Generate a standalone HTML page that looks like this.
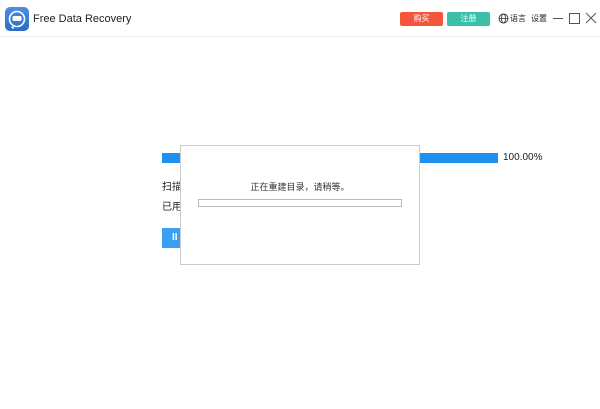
<!DOCTYPE html>
<html><head><meta charset="utf-8"><style>
body{margin:0;width:600px;height:409px;background:#fff;position:relative;overflow:hidden;font-family:"Liberation Sans","Noto Sans CJK SC",sans-serif;color:#333}
.a{position:absolute}
</style></head><body>
<div class="a" style="left:0;top:0;width:600px;height:36px;border-bottom:1px solid #eee"></div>
<div class="a" style="left:5px;top:7px;width:24px;height:24px;border-radius:5px;background:linear-gradient(#4d8fe0,#2b6cc8)">
<svg width="24" height="24"><circle cx="12" cy="12" r="7.5" fill="none" stroke="#fff" stroke-width="1.6"/><rect x="7.5" y="9" width="9" height="5" rx="1.5" fill="#fff"/><path d="M9 19l-2 1.5 2 1" stroke="#fff" fill="none" stroke-width="1.2"/></svg></div>
<div class="a" style="left:33px;top:13px;font-size:11px;color:#222">Free Data Recovery</div>
<div class="a" style="left:400px;top:12px;width:43px;height:14px;background:#f5553a;border-radius:2px;color:#fff;font-size:8px;text-align:center;line-height:14px">购买</div>
<div class="a" style="left:447px;top:12px;width:43px;height:14px;background:#3cbfa8;border-radius:2px;color:#fff;font-size:8px;text-align:center;line-height:14px">注册</div>
<svg class="a" style="left:498px;top:13px" width="11" height="11"><circle cx="5.5" cy="5.5" r="4.5" fill="none" stroke="#333" stroke-width="0.9"/><ellipse cx="5.5" cy="5.5" rx="2" ry="4.5" fill="none" stroke="#333" stroke-width="0.8"/><path d="M1 5.5h9" stroke="#333" stroke-width="0.8"/></svg>
<div class="a" style="left:510px;top:13px;font-size:8px;color:#222">语言</div>
<div class="a" style="left:531px;top:13px;font-size:8px;color:#222">设置</div>
<div class="a" style="left:553px;top:18px;width:10px;height:1px;background:#555"></div>
<div class="a" style="left:569px;top:13px;width:9px;height:9px;border:1px solid #555"></div>
<svg class="a" style="left:585px;top:12px" width="12" height="12"><path d="M1 1l10 10M11 1L1 11" stroke="#555" stroke-width="1"/></svg>
<div class="a" style="left:162px;top:153px;width:336px;height:10px;background:#1e90f0"></div>
<div class="a" style="left:503px;top:152px;font-size:10px;color:#222">100.00%</div>
<div class="a" style="left:162px;top:178px;font-size:10px;color:#222">扫描</div>
<div class="a" style="left:162px;top:198px;font-size:10px;color:#222">已用</div>
<div class="a" style="left:162px;top:228px;width:20px;height:20px;background:#3aa0f5;color:#fff;font-size:10px;line-height:20px;padding-left:10px;box-sizing:border-box;font-weight:bold">II</div>
<div class="a" style="left:180px;top:145px;width:238px;height:118px;border:1px solid #ccc;background:#fff"></div>
<div class="a" style="left:180px;top:180px;width:240px;text-align:center;font-size:9px;color:#333">正在重建目录，请稍等。</div>
<div class="a" style="left:198px;top:199px;width:202px;height:6px;border:1px solid #bbb"></div>
</body></html>
